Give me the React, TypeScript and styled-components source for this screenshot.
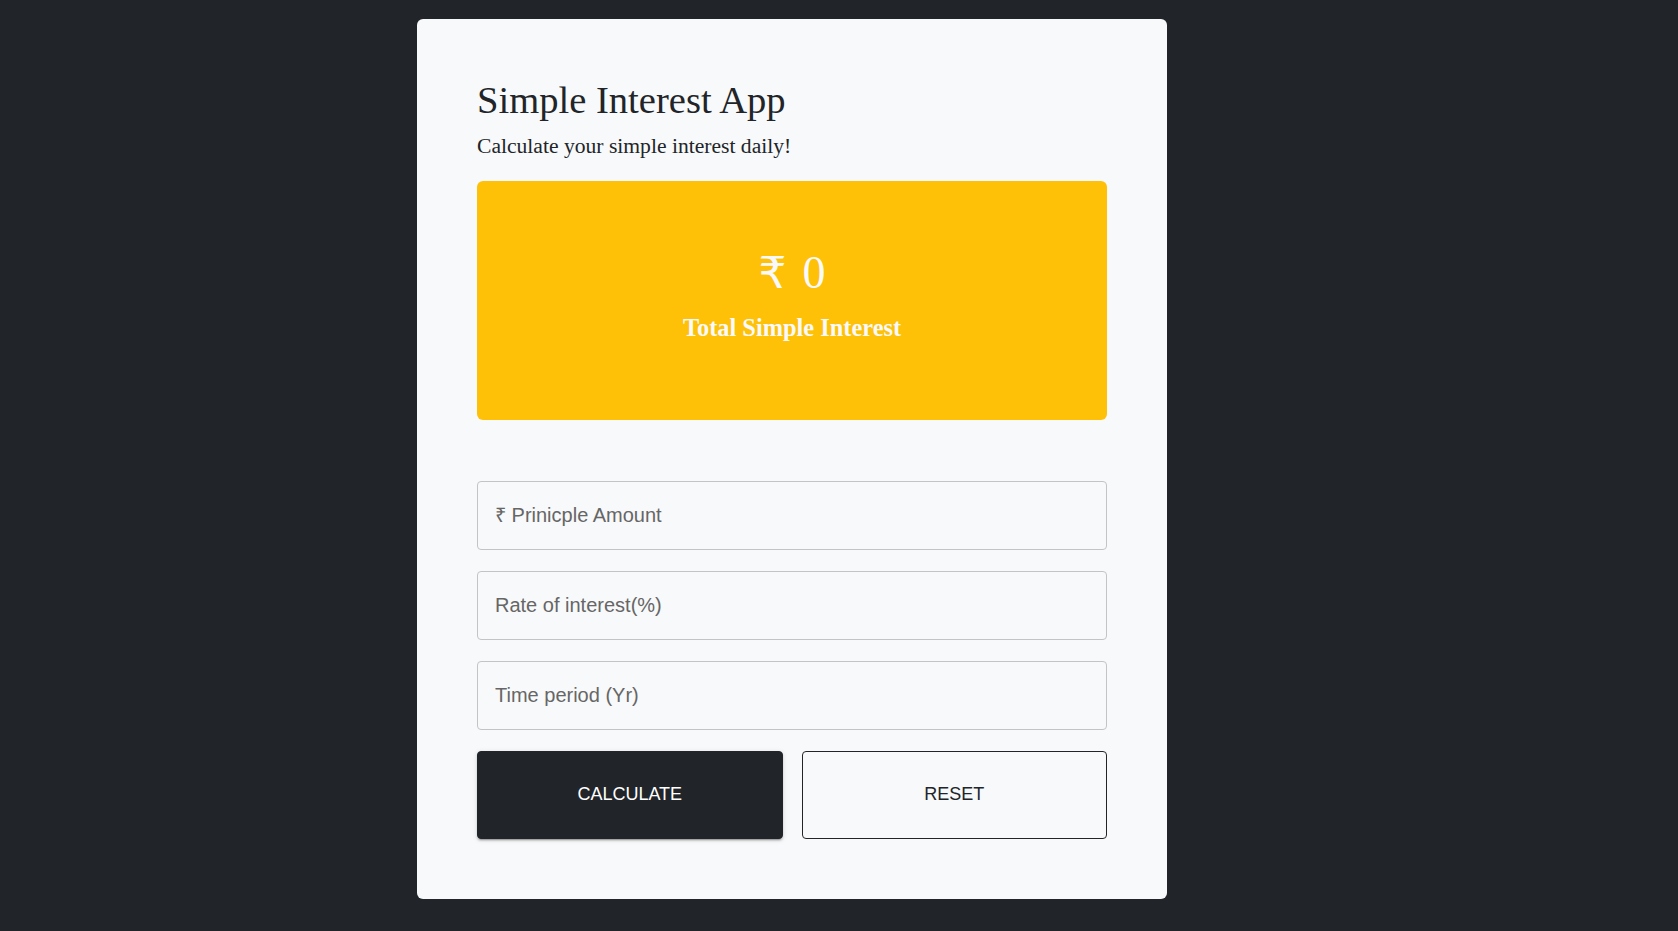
import React, { useState } from "react";
import styled, { createGlobalStyle } from "styled-components";

const GlobalStyle = createGlobalStyle`
  * {
    box-sizing: border-box;
  }
  body {
    margin: 0;
    background-color: #212529;
    font-family: "Liberation Serif", "Times New Roman", serif;
    color: #212529;
  }
`;

const StyledPage = styled.div`
  min-height: 100vh;
  display: grid;
  grid-template-columns: 750px;
  align-content: start;
  padding: 19px 0 32px 417px;
`;

const StyledCard = styled.div`
  background-color: #f8f9fa;
  border-radius: 6px;
  padding: 58px 60px 60px;
`;

const StyledTitle = styled.h1`
  margin: 0;
  font-size: 38.6px;
  font-weight: 400;
  line-height: 1.2;
`;

const StyledLead = styled.p`
  margin: 7px 0 18px;
  font-size: 21.6px;
  line-height: 1.5;
`;

const StyledResult = styled.div`
  height: 239.5px;
  display: flex;
  flex-direction: column;
  align-items: center;
  gap: 13px;
  padding-top: 64px;
  background-color: #ffc107;
  border-radius: 6px;
  color: #f8f9fa;
`;

const StyledAmount = styled.div`
  font-size: 46px;
  line-height: 1.2;
  display: flex;
  gap: 16px;
  align-items: baseline;
  span:first-child {
    font-family: "DejaVu Sans", sans-serif;
    font-size: 44px;
  }
`;

const StyledLabel = styled.div`
  font-size: 24.4px;
  font-weight: 700;
  line-height: 1.2;
`;

const StyledForm = styled.form`
  display: flex;
  flex-direction: column;
  gap: 21px;
  margin-top: 60.5px;
`;

const StyledInput = styled.input`
  height: 69px;
  width: 100%;
  padding: 0 17px;
  border: 1px solid #c4c4c4;
  border-radius: 4px;
  background: transparent;
  font-family: "Liberation Sans", Arial, sans-serif;
  font-size: 20px;
  color: #212529;
  outline: none;
  &::placeholder {
    color: #666;
  }
`;

const StyledButtons = styled.div`
  display: grid;
  grid-template-columns: 1fr 1fr;
  gap: 19px;
`;

const StyledButton = styled.button<{ $filled?: boolean }>`
  height: 88px;
  border-radius: 4px;
  border: 1px solid #212529;
  background-color: ${(p) => (p.$filled ? "#212529" : "transparent")};
  color: ${(p) => (p.$filled ? "#fff" : "#212529")};
  box-shadow: ${(p) =>
    p.$filled
      ? "0 3px 1px -2px rgba(0,0,0,0.2), 0 2px 2px 0 rgba(0,0,0,0.14), 0 1px 5px 0 rgba(0,0,0,0.12)"
      : "none"};
  font-family: "Liberation Sans", Arial, sans-serif;
  font-size: 18px;
  text-transform: uppercase;
  cursor: pointer;
`;

const App: React.FC = () => {
  const [principle, setPrinciple] = useState("");
  const [rate, setRate] = useState("");
  const [time, setTime] = useState("");
  const [interest, setInterest] = useState(0);

  const calculate = (e: React.FormEvent) => {
    e.preventDefault();
    setInterest((Number(principle) * Number(rate) * Number(time)) / 100);
  };

  const reset = () => {
    setPrinciple("");
    setRate("");
    setTime("");
    setInterest(0);
  };

  return (
    <>
      <GlobalStyle />
      <StyledPage>
        <StyledCard>
          <StyledTitle>Simple Interest App</StyledTitle>
          <StyledLead>Calculate your simple interest daily!</StyledLead>
          <StyledResult>
            <StyledAmount>
              <span>₹</span>
              <span>{interest}</span>
            </StyledAmount>
            <StyledLabel>Total Simple Interest</StyledLabel>
          </StyledResult>
          <StyledForm onSubmit={calculate}>
            <StyledInput
              placeholder="₹ Prinicple Amount"
              value={principle}
              onChange={(e) => setPrinciple(e.target.value)}
            />
            <StyledInput
              placeholder="Rate of interest(%)"
              value={rate}
              onChange={(e) => setRate(e.target.value)}
            />
            <StyledInput
              placeholder="Time period (Yr)"
              value={time}
              onChange={(e) => setTime(e.target.value)}
            />
            <StyledButtons>
              <StyledButton type="submit" $filled>
                Calculate
              </StyledButton>
              <StyledButton type="button" onClick={reset}>
                Reset
              </StyledButton>
            </StyledButtons>
          </StyledForm>
        </StyledCard>
      </StyledPage>
    </>
  );
};

export default App;
